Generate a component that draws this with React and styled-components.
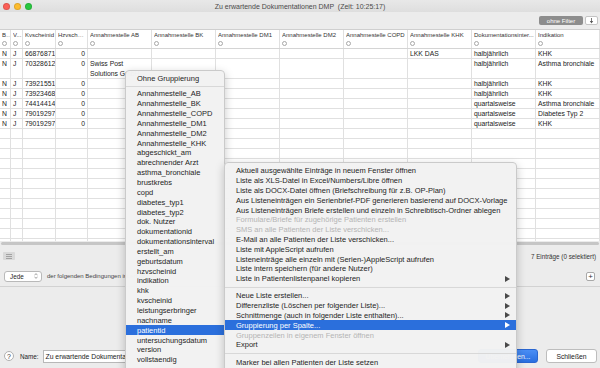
import React from "react";
import styled, { createGlobalStyle } from "styled-components";

const GlobalStyle = createGlobalStyle`
  html, body { margin: 0; padding: 0; }
  body {
    font-family: "Liberation Sans", Arial, sans-serif;
    background: #ececec;
    overflow: hidden;
  }
  * { box-sizing: border-box; }
`;

const COLS = "11px 12px 33px 32px repeat(8, 64px)";

const Window = styled.div`
  position: relative;
  width: 600px;
  height: 368px;
  display: flex;
  flex-direction: column;
  background: #ececec;
  overflow: hidden;
`;

const TitleBar = styled.div`
  height: 12px;
  display: grid;
  grid-template-columns: 1fr auto 1fr;
  align-items: center;
  background: linear-gradient(#e8e8e8, #dedede);
`;

const Lights = styled.div`
  display: flex;
  gap: 4px;
  padding-left: 3px;
`;

const Light = styled.span`
  width: 7px;
  height: 7px;
  border-radius: 50%;
  background: ${(p) => p.$color};
  border: 0.5px solid rgba(0, 0, 0, 0.12);
`;

const Title = styled.div`
  font-size: 7px;
  color: #4a4a4a;
  white-space: pre;
`;

const Toolbar = styled.div`
  height: 17px;
  display: flex;
  justify-content: flex-end;
  align-items: center;
  gap: 2px;
  padding-right: 2px;
  background: #ececec;
`;

const FilterButton = styled.div`
  height: 9px;
  width: 44px;
  border-radius: 2px;
  background: #8d8d8d;
  color: #fff;
  font-size: 6px;
  display: flex;
  align-items: center;
  justify-content: center;
`;

const SmallButton = styled.div`
  height: 9px;
  width: 13px;
  border-radius: 2px;
  background: #fff;
  border: 0.5px solid #c4c4c4;
  display: flex;
  align-items: center;
  justify-content: center;
`;

const Table = styled.div`
  height: 212px;
  background: #fff;
  border-top: 1px solid #cfcfcf;
  overflow: hidden;
`;

const HeaderRow = styled.div`
  display: grid;
  grid-template-columns: ${COLS};
  height: 19px;
  border-bottom: 1px solid #d4d4d4;
`;

const HeaderCell = styled.div`
  border-right: 1px solid #e0e0e0;
  padding: 2px 0 0 2px;
  overflow: hidden;
  display: flex;
  flex-direction: column;
  gap: 2px;
`;

const HeaderLabel = styled.div`
  font-size: 6px;
  line-height: 7px;
  color: #333;
  white-space: nowrap;
  overflow: hidden;
  text-overflow: ellipsis;
`;

const Radio = styled.span`
  width: 5px;
  height: 5px;
  border-radius: 50%;
  border: 0.6px solid #a8a8a8;
  background: #fff;
`;

const Row = styled.div`
  display: grid;
  grid-template-columns: ${COLS};
  height: ${(p) => p.$h}px;
`;

const Cell = styled.div`
  border-right: 1px solid #e0e0e0;
  border-bottom: 1px solid #e0e0e0;
  font-size: 6.8px;
  line-height: 10px;
  color: #222;
  padding: 0 2px;
  overflow: hidden;
  white-space: ${(p) => (p.$wrap ? "normal" : "nowrap")};
  text-align: ${(p) => (p.$right ? "right" : "left")};
`;

const ScrollTrack = styled.div`
  height: 5px;
  display: flex;
  align-items: center;
  padding: 0 1px;
`;

const ScrollThumb = styled.div`
  height: 3px;
  flex: 1;
  border-radius: 2px;
  background: #c6c6c6;
`;

const StatusRow = styled.div`
  height: 20px;
  display: flex;
  align-items: center;
  justify-content: space-between;
  padding: 0 4px 0 3px;
`;

const ListButton = styled.div`
  width: 12px;
  height: 8px;
  border-radius: 1px;
  background: #d9d9d9;
  display: flex;
  align-items: center;
  justify-content: center;
`;

const StatusText = styled.div`
  font-size: 6.3px;
  color: #333;
`;

const PredicateRow = styled.div`
  height: 21px;
  display: flex;
  align-items: center;
  gap: 5px;
  padding: 0 5px 0 4px;
  border-bottom: 1px solid #d2d2d2;
`;

const Popup = styled.div`
  width: 38px;
  height: 11px;
  border-radius: 3px;
  border: 0.6px solid #b9b9b9;
  background: #fff;
  font-size: 6.3px;
  color: #222;
  display: flex;
  align-items: center;
  justify-content: space-between;
  padding: 0 3px 0 5px;
`;

const PredicateText = styled.div`
  font-size: 6px;
  color: #444;
  flex: 1;
  white-space: nowrap;
`;

const PlusButton = styled.div`
  width: 9px;
  height: 9px;
  border-radius: 2px;
  border: 0.6px solid #a8a8a8;
  background: #fff;
  font-size: 8px;
  line-height: 8px;
  text-align: center;
  color: #333;
`;

const Spacer = styled.div`
  flex: 1;
`;

const BottomBar = styled.div`
  height: 24px;
  display: flex;
  align-items: center;
  gap: 4px;
  padding: 0 3px 0 4px;
`;

const HelpButton = styled.div`
  width: 10px;
  height: 10px;
  border-radius: 50%;
  border: 0.6px solid #b0b0b0;
  background: #fff;
  font-size: 7px;
  line-height: 9px;
  text-align: center;
  color: #333;
`;

const NameLabel = styled.div`
  font-size: 6.3px;
  color: #222;
  margin-left: 2px;
`;

const NameField = styled.div`
  width: 85px;
  height: 13px;
  background: #fff;
  border: 0.6px solid #b8b8b8;
  font-size: 6.8px;
  line-height: 12px;
  padding: 0 2px;
  color: #222;
  white-space: nowrap;
  overflow: hidden;
`;

const Button = styled.div`
  height: 14px;
  width: ${(p) => p.$w}px;
  border-radius: 3px;
  font-size: 6.8px;
  display: flex;
  align-items: center;
  justify-content: center;
  background: ${(p) => (p.$primary ? "linear-gradient(#4a8ef5, #2a6fe0)" : "#fff")};
  color: ${(p) => (p.$primary ? "#fff" : "#222")};
  border: 0.6px solid ${(p) => (p.$primary ? "#2a66d0" : "#bdbdbd")};
  margin-left: ${(p) => p.$ml || 0}px;
`;

const Menu = styled.div`
  position: absolute;
  background: rgba(242, 242, 242, 0.98);
  border: 0.6px solid #cacaca;
  border-radius: 4px;
  box-shadow: 0 3px 10px rgba(0, 0, 0, 0.22);
  overflow: hidden;
`;

const GroupMenu = styled(Menu)`
  left: 125px;
  top: 70px;
  width: 100px;
  height: 310px;
  padding-top: 2px;
`;

const ContextMenu = styled(Menu)`
  left: 224px;
  top: 162px;
  width: 293px;
  height: 220px;
  padding-top: 3px;
`;

const MenuItem = styled.div`
  height: ${(p) => p.$h}px;
  display: flex;
  align-items: center;
  justify-content: space-between;
  padding: 0 6px 0 11px;
  font-size: 7.5px;
  white-space: nowrap;
  color: ${(p) => (p.$active ? "#fff" : p.$disabled ? "#b4b4b4" : "#1e1e1e")};
  background: ${(p) => (p.$active ? "#2b6fdc" : "transparent")};
`;

const Separator = styled.div`
  height: ${(p) => p.$h}px;
  display: flex;
  align-items: center;
  &::after {
    content: "";
    flex: 1;
    height: 1px;
    background: #d8d8d8;
  }
`;

const Arrow = ({ light }) => (
  <svg width="5" height="6" viewBox="0 0 5 6">
    <path d="M0 0 L5 3 L0 6 Z" fill={light ? "#fff" : "#4a4a4a"} />
  </svg>
);

const headers = [
  "B...", "V...", "Kvscheinid", "Hzvschei...", "Annahmestelle AB", "Annahmestelle BK",
  "Annahmestelle DM1", "Annahmestelle DM2", "Annahmestelle COPD", "Annahmestelle KHK",
  "Dokumentationsinter...", "Indikation",
];

const rows = [
  { id: "66876871", ab: "", khk: "LKK DAS", iv: "halbjährlich", ind: "KHK" },
  { id: "70328612", ab: "Swiss Post Solutions GmbH", khk: "", iv: "halbjährlich", ind: "Asthma bronchiale", tall: true },
  { id: "73921551", ab: "", khk: "", iv: "halbjährlich", ind: "KHK" },
  { id: "73923468", ab: "", khk: "", iv: "halbjährlich", ind: "KHK" },
  { id: "74414414", ab: "", khk: "", iv: "quartalsweise", ind: "Asthma bronchiale" },
  { id: "79019297", ab: "", khk: "", iv: "quartalsweise", ind: "Diabetes Typ 2" },
  { id: "79019297", ab: "", khk: "", iv: "quartalsweise", ind: "KHK" },
];

const groupItems = [
  "Annahmestelle_AB", "Annahmestelle_BK", "Annahmestelle_COPD", "Annahmestelle_DM1",
  "Annahmestelle_DM2", "Annahmestelle_KHK", "abgeschickt_am", "abrechnender Arzt",
  "asthma_bronchiale", "brustkrebs", "copd", "diabetes_typ1", "diabetes_typ2", "dok. Nutzer",
  "dokumentationid", "dokumentationsinterval", "erstellt_am", "geburtsdatum", "hzvscheinid",
  "indikation", "khk", "kvscheinid", "leistungserbringer", "nachname", "patientid",
  "untersuchungsdatum", "version", "vollstaendig",
];

const contextItems = [
  { t: "Aktuell ausgewählte Einträge in neuem Fenster öffnen" },
  { t: "Liste als XLS-Datei in Excel/Numbers/Libre öffnen" },
  { t: "Liste als DOCX-Datei öffnen (Briefschreibung für z.B. OP-Plan)" },
  { t: "Aus Listeneinträgen ein Serienbrief-PDF generieren basierend auf DOCX-Vorlage" },
  { t: "Aus Listeneinträgen Briefe erstellen und einzeln in Schreibtisch-Ordner ablegen" },
  { t: "Formulare/Briefe für zugehörige Patienten erstellen", disabled: true },
  { t: "SMS an alle Patienten der Liste verschicken...", disabled: true },
  { t: "E-Mail an alle Patienten der Liste verschicken..." },
  { t: "Liste mit AppleScript aufrufen" },
  { t: "Listeneinträge alle einzeln mit (Serien-)AppleScript aufrufen" },
  { t: "Liste intern speichern (für andere Nutzer)" },
  { t: "Liste in Patientenlistenpanel kopieren", arrow: true },
  { sep: true },
  { t: "Neue Liste erstellen...", arrow: true },
  { t: "Differenzliste (Löschen per folgender Liste)...", arrow: true },
  { t: "Schnittmenge (auch in folgender Liste enthalten)...", arrow: true },
  { t: "Gruppierung per Spalte...", arrow: true, active: true },
  { t: "Gruppenzeilen in eigenem Fenster öffnen", disabled: true },
  { t: "Export", arrow: true },
  { sep: true },
  { t: "Marker bei allen Patienten der Liste setzen" },
  { t: "Marker bei allen Patienten der Liste entfernen" },
];

export default function App() {
  return (
    <Window>
      <GlobalStyle />
      <TitleBar>
        <Lights>
          <Light $color="#fc5f57" />
          <Light $color="#fdbc2e" />
          <Light $color="#28c840" />
        </Lights>
        <Title>Zu erwartende Dokumentationen DMP  (Zeit: 10:25:17)</Title>
        <div />
      </TitleBar>

      <Toolbar>
        <FilterButton>ohne Filter</FilterButton>
        <SmallButton>
          <svg width="5" height="6" viewBox="0 0 5 6">
            <path d="M2.5 0 V4" stroke="#555" strokeWidth="0.8" />
            <path d="M0.8 3 L2.5 5.6 L4.2 3 Z" fill="#555" />
          </svg>
        </SmallButton>
      </Toolbar>

      <Table>
        <HeaderRow>
          {headers.map((h, i) => (
            <HeaderCell key={i}>
              <HeaderLabel>{h}</HeaderLabel>
              <Radio />
            </HeaderCell>
          ))}
        </HeaderRow>
        {rows.map((r, i) => (
          <Row key={i} $h={r.tall ? 20 : 10}>
            <Cell>N</Cell>
            <Cell>J</Cell>
            <Cell>{r.id}</Cell>
            <Cell $right>0</Cell>
            <Cell $wrap>{r.ab}</Cell>
            <Cell />
            <Cell />
            <Cell />
            <Cell />
            <Cell>{r.khk}</Cell>
            <Cell>{r.iv}</Cell>
            <Cell>{r.ind}</Cell>
          </Row>
        ))}
        {Array.from({ length: 13 }).map((_, i) => (
          <Row key={"e" + i} $h={10}>
            {headers.map((_, j) => (
              <Cell key={j} />
            ))}
          </Row>
        ))}
      </Table>

      <ScrollTrack>
        <ScrollThumb />
      </ScrollTrack>

      <StatusRow>
        <ListButton>
          <svg width="6" height="5" viewBox="0 0 6 5">
            <path d="M0 0.5 H6 M0 2.5 H6 M0 4.5 H6" stroke="#8a8a8a" strokeWidth="0.7" />
          </svg>
        </ListButton>
        <StatusText>7 Einträge (0 selektiert)</StatusText>
      </StatusRow>

      <PredicateRow>
        <Popup>
          Jede
          <svg width="4" height="6" viewBox="0 0 4 6">
            <path d="M0.5 2.3 L2 0.6 L3.5 2.3 M0.5 3.7 L2 5.4 L3.5 3.7" stroke="#666" strokeWidth="0.6" fill="none" />
          </svg>
        </Popup>
        <PredicateText>der folgenden Bedingungen ist erfüllt</PredicateText>
        <PlusButton>+</PlusButton>
      </PredicateRow>

      <Spacer />

      <BottomBar>
        <HelpButton>?</HelpButton>
        <NameLabel>Name:</NameLabel>
        <NameField>Zu erwartende Dokumentationen DMP</NameField>
        <Spacer />
        <Button $primary $w={60}>Übernehmen...</Button>
        <Button $w={51} $ml={4}>Schließen</Button>
      </BottomBar>

      <GroupMenu>
        <MenuItem $h={10}>Ohne Gruppierung</MenuItem>
        <Separator $h={6} />
        {groupItems.map((g) => (
          <MenuItem key={g} $h={9.85} $active={g === "patientid"}>
            {g}
          </MenuItem>
        ))}
      </GroupMenu>

      <ContextMenu>
        {contextItems.map((c, i) =>
          c.sep ? (
            <Separator key={i} $h={7.4} />
          ) : (
            <MenuItem key={i} $h={9.8} $active={c.active} $disabled={c.disabled}>
              <span>{c.t}</span>
              {c.arrow && <Arrow light={c.active} />}
            </MenuItem>
          )
        )}
      </ContextMenu>
    </Window>
  );
}
